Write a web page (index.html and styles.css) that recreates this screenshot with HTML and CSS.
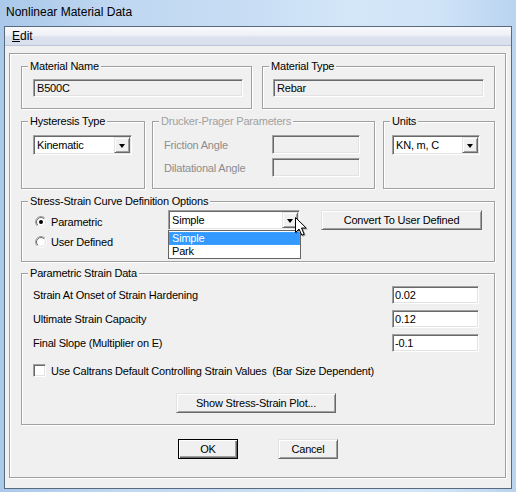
FILE: index.html
```html
<!DOCTYPE html>
<html>
<head>
<meta charset="utf-8">
<title>Nonlinear Material Data</title>
<link rel="stylesheet" href="styles.css">
</head>
<body>
<div class="titlebar">Nonlinear Material Data</div>
<div class="window">
  <div class="menubar"><span class="menu-item"><u>E</u>dit</span></div>
  <div class="client">
    <div class="frame">
      <div class="row row-1">
        <div class="group g-name">
          <div class="group-title">Material Name</div>
          <div class="textbox readonly w-name">B500C</div>
        </div>
        <div class="group g-type">
          <div class="group-title">Material Type</div>
          <div class="textbox readonly w-type">Rebar</div>
        </div>
      </div>

      <div class="row row-2">
        <div class="group g-hyst">
          <div class="group-title">Hysteresis Type</div>
          <div class="combo w-hyst"><span class="combo-text">Kinematic</span><span class="combo-btn"><span class="arrow"></span></span></div>
        </div>
        <div class="group g-dp disabled">
          <div class="group-title">Drucker-Prager Parameters</div>
          <div class="dp-row"><span class="dp-label">Friction Angle</span><div class="textbox readonly w-dp"></div></div>
          <div class="dp-row dp-row-2"><span class="dp-label">Dilatational Angle</span><div class="textbox readonly w-dp"></div></div>
        </div>
        <div class="group g-units">
          <div class="group-title">Units</div>
          <div class="combo w-units"><span class="combo-text">KN, m, C</span><span class="combo-btn"><span class="arrow"></span></span></div>
        </div>
      </div>

      <div class="group g-ss">
        <div class="group-title">Stress-Strain Curve Definition Options</div>
        <div class="ss-body">
          <div class="radios">
            <div class="radio-row">
              <svg class="radio" width="12" height="12" viewBox="0 0 12 12">
                <defs>
                  <linearGradient id="ro" x1="0" y1="0" x2="1" y2="1"><stop offset="0.48" stop-color="#a0a0a0"/><stop offset="0.52" stop-color="#ffffff"/></linearGradient>
                  <linearGradient id="ri" x1="0" y1="0" x2="1" y2="1"><stop offset="0.48" stop-color="#696969"/><stop offset="0.52" stop-color="#e3e3e3"/></linearGradient>
                </defs>
                <circle cx="6" cy="6" r="5.5" fill="none" stroke="url(#ro)"/>
                <circle cx="6" cy="6" r="4.5" fill="#fff" stroke="url(#ri)"/>
                <circle cx="6" cy="6" r="2" fill="#000"/>
              </svg>
              <span>Parametric</span>
            </div>
            <div class="radio-row">
              <svg class="radio" width="12" height="12" viewBox="0 0 12 12">
                <circle cx="6" cy="6" r="5.5" fill="none" stroke="url(#ro)"/>
                <circle cx="6" cy="6" r="4.5" fill="#fff" stroke="url(#ri)"/>
              </svg>
              <span>User Defined</span>
            </div>
          </div>
          <div class="combo-wrap">
            <div class="combo w-ss"><span class="combo-text">Simple</span><span class="combo-btn"><span class="arrow"></span></span></div>
            <div class="dropdown">
              <div class="dd-item selected">Simple</div>
              <div class="dd-item">Park</div>
            </div>
            <svg class="cursor" width="14" height="21" viewBox="0 0 14 21">
              <path d="M1.5 1.5 L1.5 16.5 L5 13 L7.8 19.2 L10.2 18.2 L7.5 12 L12.2 12 Z" fill="#fff" stroke="#000" stroke-width="1" stroke-linejoin="miter"/>
            </svg>
          </div>
          <button class="btn btn-convert">Convert To User Defined</button>
        </div>
      </div>

      <div class="group g-param">
        <div class="group-title">Parametric Strain Data</div>
        <div class="param-row"><span>Strain At Onset of Strain Hardening</span><div class="textbox w-param">0.02</div></div>
        <div class="param-row"><span>Ultimate Strain Capacity</span><div class="textbox w-param">0.12</div></div>
        <div class="param-row"><span>Final Slope (Multiplier on E)</span><div class="textbox w-param">-0.1</div></div>
        <div class="check-row"><span class="checkbox"></span><span>Use Caltrans Default Controlling Strain Values&nbsp; (Bar Size Dependent)</span></div>
        <div class="plot-row"><button class="btn btn-plot">Show Stress-Strain Plot...</button></div>
      </div>

      <div class="ok-row">
        <button class="btn btn-ok default">OK</button>
        <button class="btn btn-ok">Cancel</button>
      </div>
    </div>
  </div>
</div>
</body>
</html>
```
FILE: styles.css
```css
html, body {
  margin: 0;
  padding: 0;
}
body {
  width: 516px;
  height: 492px;
  overflow: hidden;
  background: linear-gradient(90deg, #aac8ea 0%, #bfd7f1 22%, #c6dcf3 45%, #d4e7f9 68%, #d0e4f8 85%, #b9d3ef 100%);
  font-family: "Liberation Sans", Arial, sans-serif;
  font-size: 11px;
  color: #000;
}
.titlebar {
  height: 26px;
  line-height: 25px;
  padding-left: 6px;
  font-size: 12px;
  color: #000;
}
.window {
  margin-left: 4px;
  width: 508px;
  height: 463px;
  box-sizing: border-box;
  border: 1px solid #5a6a7e;
  display: flex;
  flex-direction: column;
}
.menubar {
  height: 18px;
  line-height: 18px;
  border-bottom: 1px solid #bcc4d8;
  background: linear-gradient(#f8f9fc 0%, #eef0f7 45%, #dde2ef 55%, #d9deec 100%);
  padding-left: 7px;
  font-size: 12px;
}
.menu-item u {
  text-decoration: underline;
  text-underline-offset: 1px;
}
.client {
  flex: 1;
  background: #f0f0f0;
  padding: 7px 5px 10px 4px;
}
.frame {
  height: 425px;
  box-sizing: border-box;
  border: 1px solid #a0a0a0;
  box-shadow: inset 1px 1px #fff, 1px 1px #fff;
  padding: 0 10px 0 11px;
  letter-spacing: -0.2px;
}
.row {
  display: flex;
}
.group {
  --pl: 11px;
  box-sizing: border-box;
  border: 1px solid #a0a0a0;
  box-shadow: inset 1px 1px #fff, 1px 1px #fff;
  padding-left: var(--pl);
}
.group-title {
  display: table;
  margin: -7px 0 0 calc(6px - var(--pl));
  padding: 0 2px;
  line-height: 13px;
  background: #f0f0f0;
}
.disabled .group-title {
  color: #a0a0a0;
}

/* text boxes */
.textbox {
  box-sizing: border-box;
  height: 18px;
  border: 1px solid;
  border-color: #a0a0a0 #fff #fff #a0a0a0;
  box-shadow: inset 1px 1px #696969, inset -1px -1px #e3e3e3;
  background: #fff;
  padding: 0 0 0 3px;
  line-height: 16px;
  white-space: nowrap;
}
.textbox.readonly {
  background: #f0f0f0;
}

/* row 1 */
.row-1 {
  margin-top: 12px;
  gap: 10px;
}
.g-name {
  width: 231px;
  padding-right: 8px;
  padding-bottom: 11px;
}
.g-type {
  --pl: 10px;
  width: 233px;
  padding-right: 10px;
  padding-bottom: 11px;
}
.w-name, .w-type {
  margin-top: 6px;
}
.w-name { width: 210px; }
.w-type { width: 211px; }

/* row 2 */
.row-2 {
  margin-top: 12px;
}
.g-hyst {
  width: 124px;
}
.g-dp {
  width: 223px;
  margin-left: 7px;
  padding-right: 14px;
  padding-bottom: 11px;
}
.g-units {
  --pl: 8px;
  width: 112px;
  margin-left: 8px;
}
.combo {
  box-sizing: border-box;
  height: 20px;
  border: 1px solid;
  border-color: #a0a0a0 #fff #fff #a0a0a0;
  box-shadow: inset 1px 1px #696969, inset -1px -1px #e3e3e3;
  background: #fff;
  padding: 1px 1px 1px 3px;
  display: flex;
  align-items: center;
}
.combo-text {
  flex: 1;
  white-space: nowrap;
}
.combo-btn {
  box-sizing: border-box;
  width: 16px;
  height: 16px;
  border: 1px solid;
  border-color: #e3e3e3 #696969 #696969 #e3e3e3;
  box-shadow: inset 1px 1px #fff, inset -1px -1px #a0a0a0;
  background: #f0f0f0;
  display: flex;
  align-items: center;
  justify-content: center;
}
.arrow {
  width: 0;
  height: 0;
  border-left: 3.5px solid transparent;
  border-right: 3.5px solid transparent;
  border-top: 4px solid #000;
  margin-top: 1px;
}
.w-hyst {
  width: 99px;
  margin-top: 7px;
}
.w-units {
  width: 88px;
  margin-top: 7px;
}
.dp-row {
  display: flex;
  align-items: center;
  justify-content: space-between;
  height: 19px;
  margin-top: 7px;
}
.dp-row-2 {
  margin-top: 4px;
}
.dp-label {
  color: #8d8d8d;
}
.w-dp {
  width: 88px;
  height: 19px;
}

/* stress-strain group */
.g-ss {
  --pl: 13px;
  margin-top: 12px;
  padding-bottom: 9px;
}
.ss-body {
  display: flex;
  align-items: flex-start;
  margin-top: 2px;
}
.radios {
  width: 133px;
  padding-top: 2px;
}
.radio-row {
  height: 20px;
  display: flex;
  align-items: center;
}
.radio {
  display: block;
  margin-right: 4px;
  flex: none;
}
.combo-wrap {
  position: relative;
  width: 132px;
}
.w-ss {
  width: 132px;
}
.dropdown {
  position: absolute;
  left: 0;
  top: 20px;
  width: 133px;
  box-sizing: border-box;
  border: 1px solid #646464;
  background: #fff;
  padding: 1px 0 0 0;
  z-index: 2;
}
.dd-item {
  height: 13px;
  line-height: 13px;
  padding-left: 3px;
}
.dd-item.selected {
  background: #3399ff;
  color: #fff;
  outline: 1px dotted #e0862c;
  outline-offset: -1px;
}
.cursor {
  position: absolute;
  left: 126px;
  top: 6px;
  z-index: 3;
  filter: drop-shadow(1px 1px 0.6px rgba(0,0,0,0.35));
}

/* buttons */
.btn {
  box-sizing: border-box;
  height: 20px;
  margin: 0;
  padding: 0;
  border: 1px solid;
  border-color: #e3e3e3 #696969 #696969 #e3e3e3;
  box-shadow: inset 1px 1px #fff, inset -1px -1px #a0a0a0;
  background: #f0f0f0;
  font-family: inherit;
  font-size: 11px;
  letter-spacing: -0.2px;
  color: #000;
  line-height: 16px;
  text-align: center;
}
.btn.default {
  border-color: #000;
  box-shadow: inset 1px 1px #fff, inset -1px -1px #696969, inset -2px -2px #a0a0a0;
}
.btn-convert {
  width: 161px;
  margin-left: 21px;
}

/* parametric group */
.g-param {
  margin-top: 11px;
  padding-right: 15px;
  padding-bottom: 11px;
}
.param-row {
  display: flex;
  align-items: center;
  justify-content: space-between;
  height: 18px;
  margin-top: 6px;
}
.w-param {
  width: 87px;
  padding-left: 2px;
}
.check-row {
  display: flex;
  align-items: center;
  height: 13px;
  margin-top: 12px;
}
.checkbox {
  box-sizing: border-box;
  width: 13px;
  height: 13px;
  border: 1px solid;
  border-color: #a0a0a0 #fff #fff #a0a0a0;
  box-shadow: inset 1px 1px #696969, inset -1px -1px #e3e3e3;
  background: #fff;
  margin-right: 5px;
  flex: none;
}
.plot-row {
  display: flex;
  justify-content: center;
  margin-top: 16px;
}
.btn-plot {
  width: 160px;
}
.ok-row {
  display: flex;
  justify-content: center;
  gap: 40px;
  margin-top: 14px;
}
.btn-ok {
  width: 60px;
}
```
